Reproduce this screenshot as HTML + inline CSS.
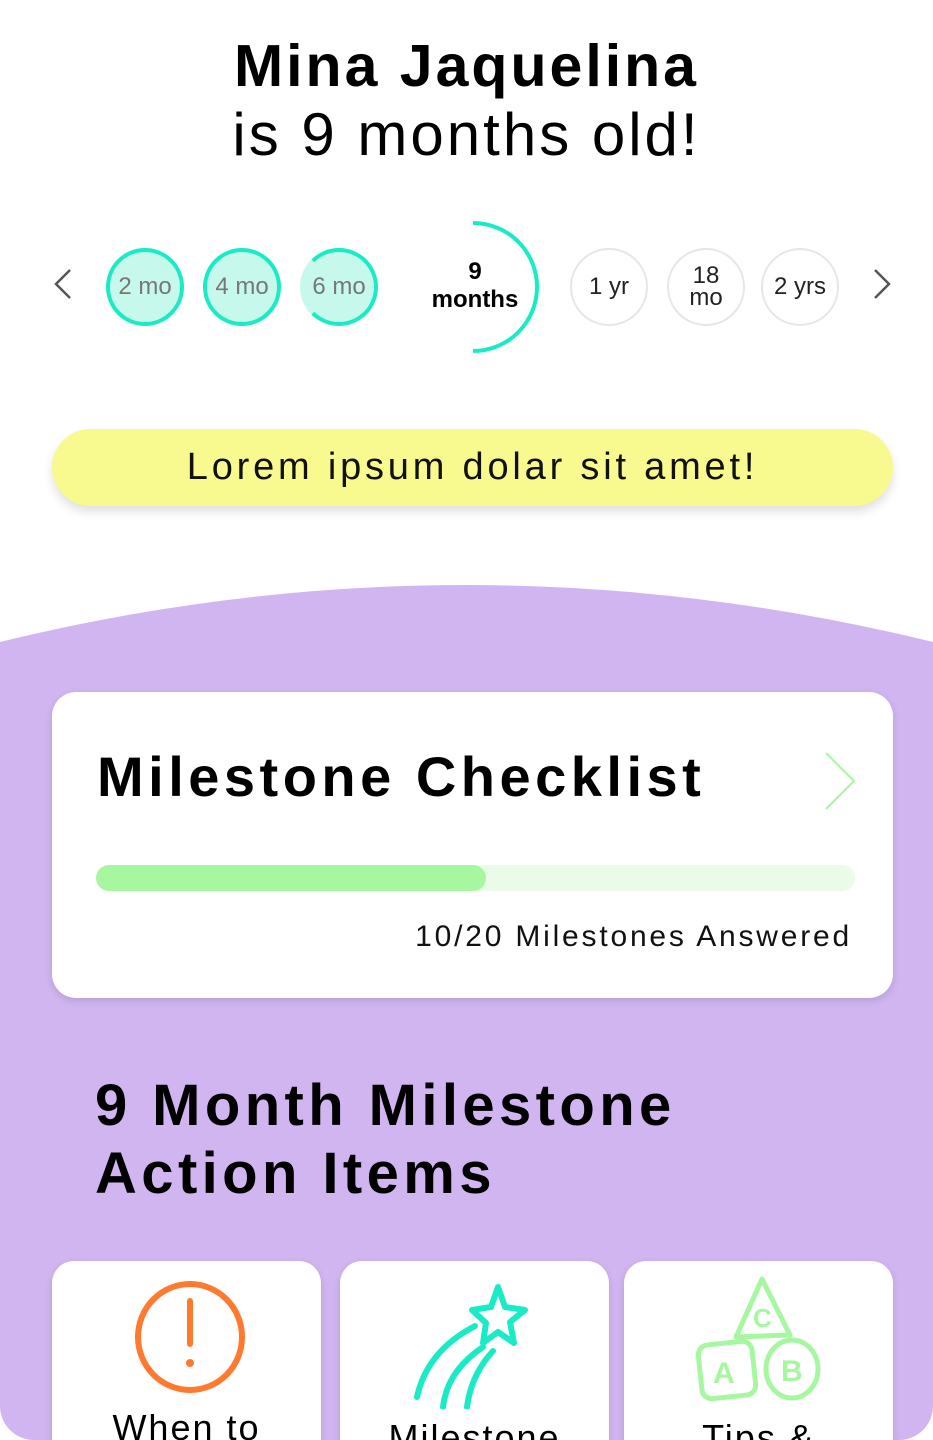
<!DOCTYPE html>
<html><head><meta charset="utf-8"><style>
*{margin:0;padding:0;box-sizing:border-box}
html,body{width:933px;height:1440px;overflow:hidden;background:#fff;font-family:"Liberation Sans",sans-serif;color:#000}
#wrap{position:relative;width:933px;height:1440px;overflow:hidden;border-radius:0 0 34px 34px}
.abs{position:absolute}
.t1{left:0;width:933px;text-align:center;top:32px;font-size:59px;font-weight:bold;letter-spacing:3px}
.t2{left:0;width:933px;text-align:center;top:100px;font-size:60px;letter-spacing:3px}
.c{position:absolute;width:78px;height:78px;border-radius:50%;top:248px;display:flex;align-items:center;justify-content:center;font-size:24px;color:#777;text-align:center;line-height:22px}
.g{border:4px solid #18ebc6;background:#c6f9eb}
.w{border:2px solid #e6e6e6;color:#222}
.pill{left:52px;top:429px;width:841px;height:77px;border-radius:39px;background:#f8f98f;box-shadow:0 6px 10px rgba(0,0,0,.12);text-align:center;font-size:38px;line-height:77px;color:#111;letter-spacing:3.8px}
.card{background:#fff;border-radius:24px;box-shadow:0 3px 8px rgba(0,0,0,.12)}
.sm{top:1261px;height:240px;width:269px;text-align:center;font-size:36px;border-radius:22px;letter-spacing:2px}
</style></head><body><div id="wrap">
<div class="abs t1">Mina Jaquelina</div>
<div class="abs t2">is 9 months old!</div>
<svg class="abs" style="left:0;top:200px" width="933" height="180">
<path d="M70 270 L56 284 L70 298" transform="translate(0,-200)" fill="none" stroke="#555" stroke-width="2.5"/>
<path d="M875 270 L889 284 L875 298" transform="translate(0,-200)" fill="none" stroke="#555" stroke-width="2.5"/>
<path d="M473 23 A64 64 0 0 1 473 151" fill="none" stroke="#18ebc6" stroke-width="4"/>
</svg>
<div class="c g" style="left:106px">2 mo</div>
<div class="c g" style="left:203px">4 mo</div>
<div class="c g" style="left:300px;border-left-color:#c6f9eb">6 mo</div>
<div class="abs" style="left:420px;top:258px;width:110px;text-align:center;font-weight:bold;font-size:24px;line-height:28px">9<br>months</div>
<div class="c w" style="left:570px">1 yr</div>
<div class="c w" style="left:667px">18<br>mo</div>
<div class="c w" style="left:761px">2 yrs</div>
<div class="abs pill">Lorem ipsum dolar sit amet!</div>
<svg class="abs" style="left:0;top:580px" width="933" height="860">
<path d="M0 62 Q466 -52 933 62 L933 860 L0 860 Z" fill="#d0b5f0"/>
</svg>
<div class="abs card" style="left:52px;top:692px;width:841px;height:306px">
<div class="abs" style="left:45px;top:52px;font-size:56px;font-weight:bold;letter-spacing:4.5px">Milestone Checklist</div>
<svg class="abs" style="left:770px;top:58px" width="40" height="62"><path d="M4 3 L32 31 L4 59" fill="none" stroke="#a6f7a0" stroke-width="2"/></svg>
<div class="abs" style="left:44px;top:173px;width:759px;height:26px;border-radius:13px;background:#eafbe8"></div>
<div class="abs" style="left:44px;top:173px;width:390px;height:26px;border-radius:13px;background:#a6f7a0"></div>
<div class="abs" style="right:41px;top:228px;font-size:30px;color:#111;letter-spacing:2.8px">10/20 Milestones Answered</div>
</div>
<div class="abs" style="left:95px;top:1072px;font-size:58px;font-weight:bold;line-height:68px;letter-spacing:4.4px">9 Month Milestone<br>Action Items</div>
<div class="abs card sm" style="left:52px">
<svg width="120" height="120" style="position:absolute;left:80px;top:18px"><ellipse cx="58" cy="58" rx="52" ry="53" fill="none" stroke="#ff7a2f" stroke-width="6"/><line x1="58" y1="22" x2="58" y2="65" stroke="#ff7a2f" stroke-width="6" stroke-linecap="round"/><circle cx="58" cy="84" r="4" fill="#ff7a2f"/></svg>
<div style="position:absolute;left:0;width:269px;top:146px">When to</div></div>
<div class="abs card sm" style="left:340px">
<svg width="130" height="130" style="position:absolute;left:65px;top:18px"><path d="M93 8 L100 28 L120 31 L105 43 L109 64 L93 53 L78 64 L81 44 L67 31 L86 28 Z" fill="none" stroke="#18ebc6" stroke-width="6" stroke-linejoin="round"/><path d="M70 47 Q22 72 12 118" fill="none" stroke="#18ebc6" stroke-width="6" stroke-linecap="round"/><path d="M78 68 Q42 92 38 128" fill="none" stroke="#18ebc6" stroke-width="6" stroke-linecap="round"/><path d="M88 72 Q66 96 62 128" fill="none" stroke="#18ebc6" stroke-width="6" stroke-linecap="round"/></svg>
<div style="position:absolute;left:0;width:269px;top:156px">Milestone</div></div>
<div class="abs card sm" style="left:624px">
<svg width="140" height="140" style="position:absolute;left:72px;top:14px"><path d="M66 4 L94 60 L40 62 Z" fill="none" stroke="#a6f7a0" stroke-width="5" stroke-linejoin="round"/><text x="57" y="52" font-size="26" fill="#a6f7a0" font-family="Liberation Sans" font-weight="bold">C</text><rect x="4" y="68" width="54" height="54" rx="10" transform="rotate(-6 31 95)" fill="none" stroke="#a6f7a0" stroke-width="5"/><text x="17" y="108" font-size="30" fill="#a6f7a0" font-family="Liberation Sans" font-weight="bold">A</text><ellipse cx="96" cy="94" rx="26" ry="29" fill="none" stroke="#a6f7a0" stroke-width="5"/><text x="85" y="106" font-size="30" fill="#a6f7a0" font-family="Liberation Sans" font-weight="bold">B</text></svg>
<div style="position:absolute;left:0;width:269px;top:156px">Tips &amp;</div></div>
</div></body></html>
